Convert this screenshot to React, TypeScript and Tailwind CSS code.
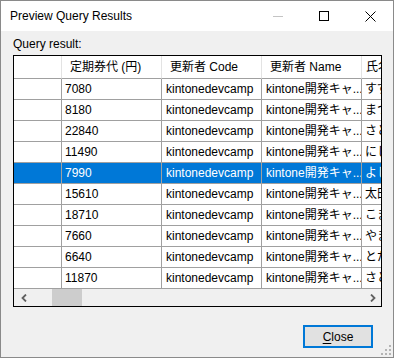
import React from "react";

// ─── Data ─────────────────────────────────────────────────────────────────────

const ROWS = [
  { fare: "7080", name: "すずき" },
  { fare: "8180", name: "まつだ" },
  { fare: "22840", name: "さとう" },
  { fare: "11490", name: "にしむら" },
  { fare: "7990", name: "よしだ" },
  { fare: "15610", name: "太田" },
  { fare: "18710", name: "こまつ" },
  { fare: "7660", name: "やまだ" },
  { fare: "6640", name: "とだ" },
  { fare: "11870", name: "さとう" },
];

const SELECTED = 4;

const FONT = {
  fontFamily: '"Liberation Sans", "Noto Sans CJK JP", sans-serif',
};

// ─── Small drawings ───────────────────────────────────────────────────────────

function Chevron({ dir }: { dir: "left" | "right" }) {
  return (
    <svg width="6" height="8" viewBox="0 0 6 8" aria-hidden="true">
      <polyline
        points={dir === "left" ? "5,0.5 1.5,4 5,7.5" : "1,0.5 4.5,4 1,7.5"}
        fill="none"
        stroke="#606060"
        strokeWidth={1.8}
      />
    </svg>
  );
}

function SizeGrip() {
  const dots = [
    [8, 0],
    [4, 4],
    [8, 4],
    [0, 8],
    [4, 8],
    [8, 8],
  ];
  return (
    <svg width="10" height="10" viewBox="0 0 10 10" aria-hidden="true">
      {dots.map(([x, y]) => (
        <rect key={`${x}-${y}`} x={x} y={y} width="2" height="2" fill="#b4b4b4" />
      ))}
    </svg>
  );
}

// ─── Component ────────────────────────────────────────────────────────────────

export default function App() {
  const cell =
    "h-[21px] border-r border-b border-[#a0a0a0] flex items-center whitespace-nowrap overflow-hidden text-[12px]";
  const head =
    "h-[23px] bg-white border-r border-b border-r-[#e3e3e3] border-b-[#a0a0a0] flex items-center whitespace-nowrap overflow-hidden text-[12px] text-black";

  return (
    <div
      className="relative flex h-[358px] w-[394px] flex-col border border-[#8a8a8a] bg-[#f0f0f0] text-black"
      style={FONT}
    >
      {/* ── Title bar ─────────────────────────────────────────────────────── */}
      <div className="flex h-[30px] items-center bg-white">
        <span className="flex-1 pl-[9px] text-[12px] leading-none">
          Preview Query Results
        </span>
        <div className="flex h-full w-[46px] items-center justify-center">
          <div className="h-px w-[10px] bg-[#c4c4c4]" />
        </div>
        <div className="flex h-full w-[46px] items-center justify-center">
          <div className="h-[10px] w-[10px] border border-black" />
        </div>
        <div className="flex h-full w-[46px] items-center justify-center">
          <svg width="11" height="11" viewBox="0 0 11 11" aria-hidden="true">
            <path d="M0.5 0.5 L10.5 10.5 M10.5 0.5 L0.5 10.5" stroke="#000" strokeWidth={1} />
          </svg>
        </div>
      </div>

      {/* ── Body ──────────────────────────────────────────────────────────── */}
      <div className="flex flex-1 flex-col pl-[12px]">
        <div className="h-[24px] pt-[6px] text-[12px] leading-[15px]">Query result:</div>

        <div className="flex h-[252px] w-[369px] flex-col overflow-hidden border border-black bg-[#f0f0f0]">
          <div className="grid grid-cols-[48px_100px_100px_100px_100px] overflow-hidden">
            {/* header */}
            <div className={head} />
            <div className={`${head} pl-[8px]`}>定期券代 (円)</div>
            <div className={`${head} pl-[8px]`}>更新者 Code</div>
            <div className={`${head} pl-[8px]`}>更新者 Name</div>
            <div className={`${head} pl-[4px]`}>氏名</div>

            {ROWS.map((r, i) => {
              const sel = i === SELECTED;
              const bg = sel ? "bg-[#0078d7] text-white" : "bg-white text-black";
              return (
                <React.Fragment key={i}>
                  <div className={`${cell} ${bg}`} />
                  <div className={`${cell} ${bg} pl-[3px]`}>{r.fare}</div>
                  <div className={`${cell} ${bg} pl-[4px]`}>kintonedevcamp</div>
                  <div className={`${cell} ${bg} pl-[4px]`}>kintone開発キャ...</div>
                  <div className={`${cell} ${bg} pl-[3px]`}>{r.name}</div>
                </React.Fragment>
              );
            })}
          </div>

          {/* horizontal scrollbar */}
          <div className="flex h-[17px] items-center bg-[#f0f0f0]">
            <div className="flex w-[17px] justify-center pl-[2px]">
              <Chevron dir="left" />
            </div>
            <div className="ml-[21px] h-full w-[30px] bg-[#cdcdcd]" />
            <div className="flex-1" />
            <div className="flex w-[17px] justify-center">
              <Chevron dir="right" />
            </div>
          </div>
        </div>

        <div className="mt-[18px] flex justify-end pr-[20px]">
          <button
            type="button"
            className="flex h-[23px] w-[70px] items-center justify-center border-2 border-[#0078d7] bg-[#e1e1e1] text-[12px] leading-none"
          >
            <span>
              <span className="underline underline-offset-2">C</span>lose
            </span>
          </button>
        </div>
      </div>

      <div className="absolute bottom-[2px] right-[2px]">
        <SizeGrip />
      </div>
    </div>
  );
}
